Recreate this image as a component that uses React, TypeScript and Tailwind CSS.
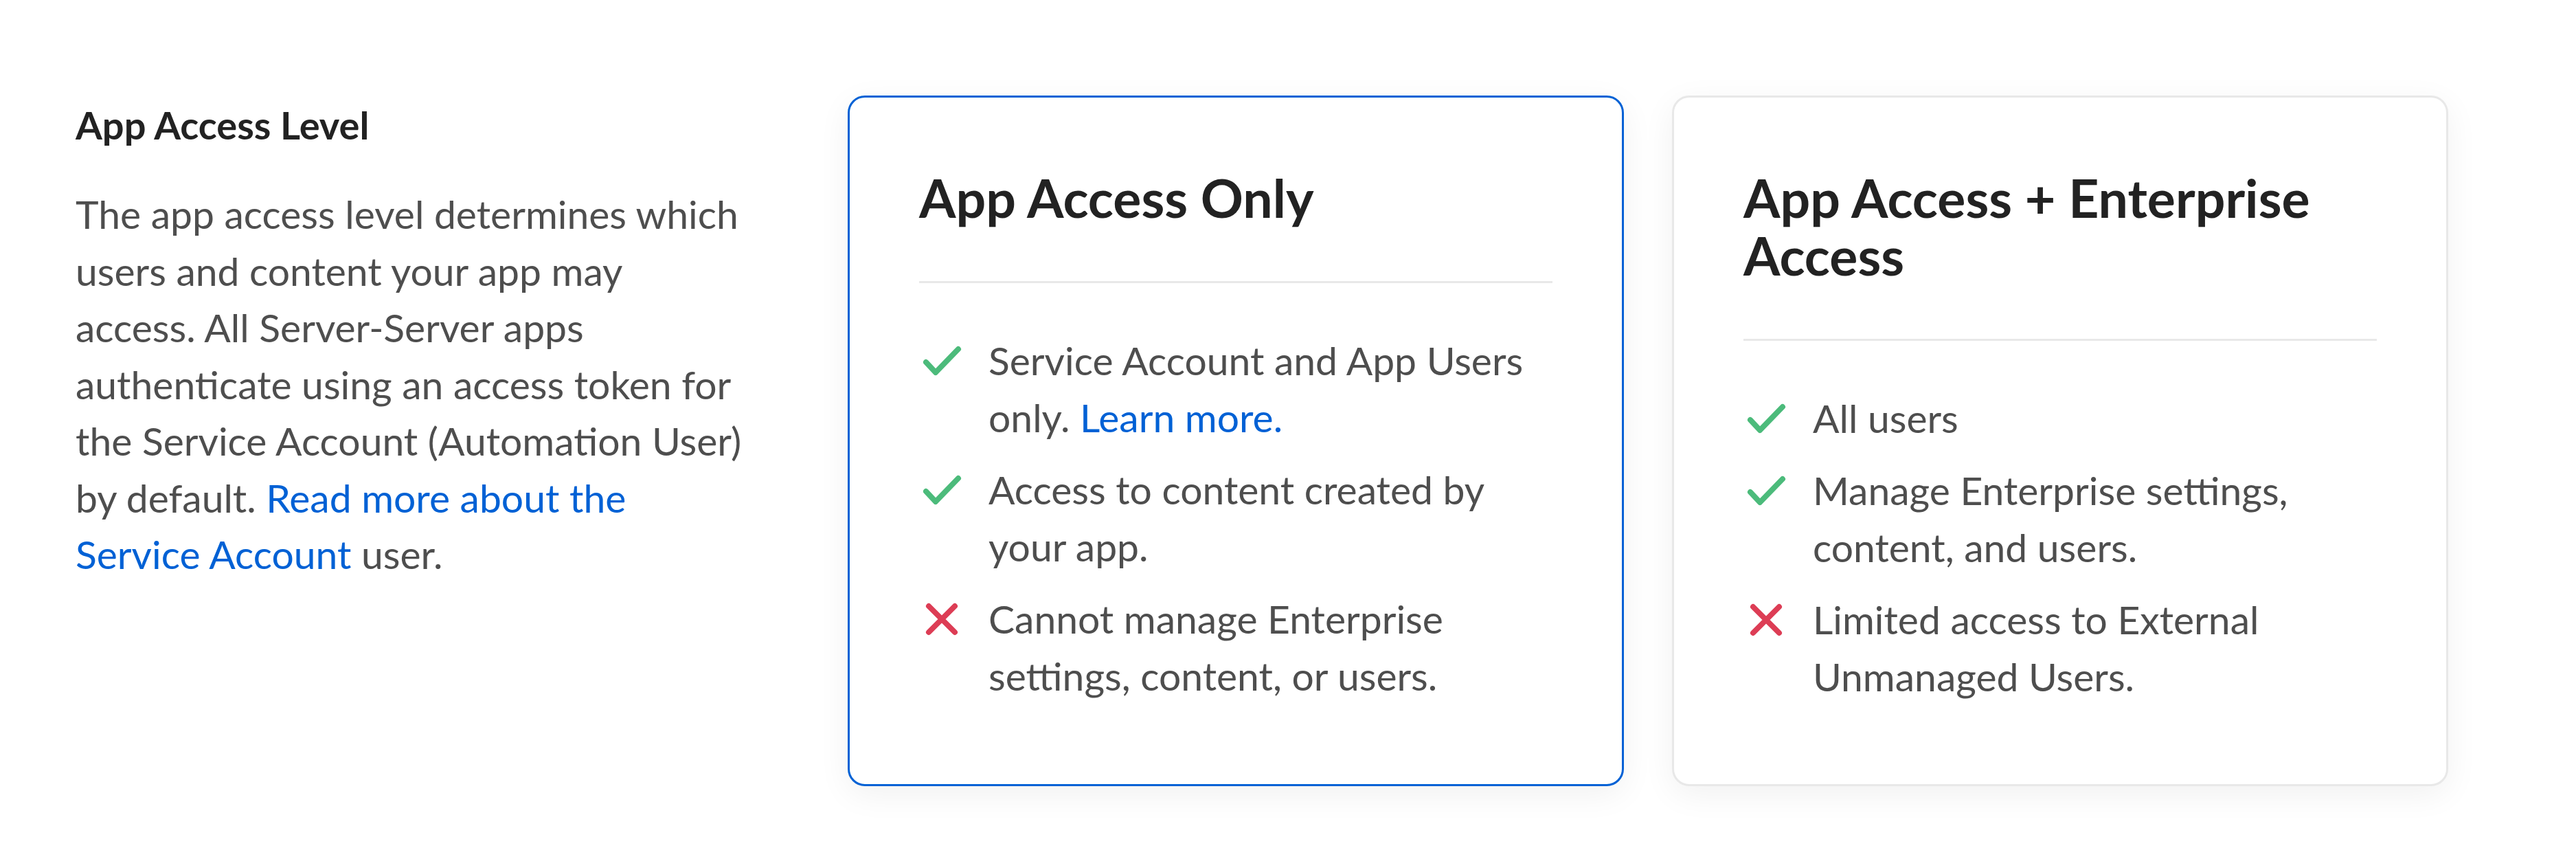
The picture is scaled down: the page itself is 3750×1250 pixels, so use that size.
type Point = { ok: boolean; text: React.ReactNode };

type Plan = {
  title: React.ReactNode;
  selected: boolean;
  points: Point[];
};

const link = "text-[#0061d5]";

const plans: Plan[] = [
  {
    title: "App Access Only",
    selected: true,
    points: [
      {
        ok: true,
        text: (
          <>
            Service Account and App Users only. <span className={link}>Learn more.</span>
          </>
        ),
      },
      { ok: true, text: "Access to content created by your app." },
      { ok: false, text: "Cannot manage Enterprise settings, content, or users." },
    ],
  },
  {
    title: "App Access + Enterprise Access",
    selected: false,
    points: [
      { ok: true, text: "All users" },
      { ok: true, text: "Manage Enterprise settings, content, and users." },
      { ok: false, text: "Limited access to External Unmanaged Users." },
    ],
  },
];

function Check() {
  return (
    <svg width="60" height="48" viewBox="0 0 60 48" className="ml-[2px]">
      <path d="M8 26 L22 41 L55 7" fill="none" stroke="#4cbb7b" strokeWidth="8" strokeLinecap="round" strokeLinejoin="round" />
    </svg>
  );
}

function Cross() {
  return (
    <svg width="50" height="50" viewBox="0 0 50 50" className="ml-[8px]">
      <path d="M6 6 L44 44 M44 6 L6 44" fill="none" stroke="#dd3d55" strokeWidth="8" strokeLinecap="round" />
    </svg>
  );
}

export default function App() {
  return (
    <div className="w-[3750px] h-[1250px] bg-white font-['Lato',sans-serif] flex items-start pl-[110px] pt-[139px] gap-[149px]">
      <div className="w-[975px] shrink-0">
        <h2 className="text-[56px] leading-[60px] font-bold text-[#222] mt-[13px]">App Access Level</h2>
        <p className="mt-[58px] text-[57px] leading-[82.5px] text-[#4e4e4e]">
          The app access level determines which users and content your app may access. All Server-Server apps
          authenticate using an access token for the Service Account (Automation User) by default.{" "}
          <span className={link}>Read more about the Service Account</span> user.
        </p>
      </div>

      <div className="flex items-stretch gap-[70px]">
        {plans.map((p, i) => (
          <div
            key={i}
            className={`w-[1130px] rounded-[25px] bg-white border-[3px] px-[101px] pt-[103px] pb-[115px] shadow-[0_12px_48px_rgba(0,0,0,0.06)] ${
              p.selected ? "border-[#0061d5]" : "border-[#e8e8e8]"
            }`}
          >
            <h3 className="text-[77px] leading-[84px] font-bold text-[#222] pr-[40px]">{p.title}</h3>
            <div className="mt-[80px] h-[3px] bg-[#e8e8e8]" />
            <ul className="mt-[71px] flex flex-col gap-[22px]">
              {p.points.map((pt, j) => (
                <li key={j} className="flex">
                  <div className="w-[101px] h-[83px] shrink-0 flex items-center">
                    {pt.ok ? <Check /> : <Cross />}
                  </div>
                  <p className="text-[57px] leading-[83px] text-[#4e4e4e]">{pt.text}</p>
                </li>
              ))}
            </ul>
          </div>
        ))}
      </div>
    </div>
  );
}
